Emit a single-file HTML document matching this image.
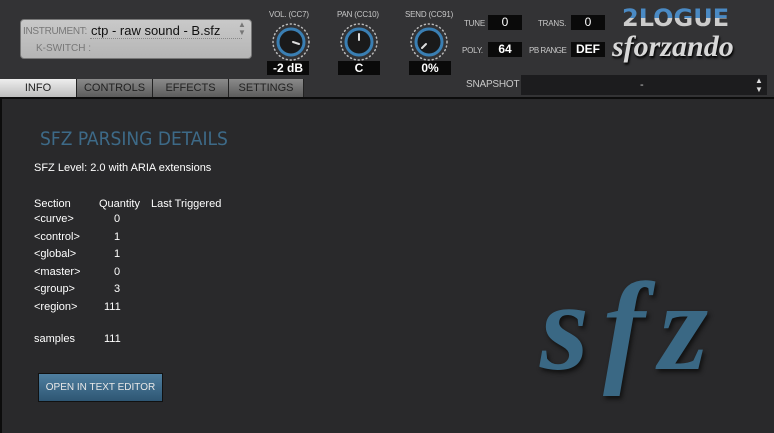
<!DOCTYPE html>
<html><head><style>
body{margin:0;width:774px;height:433px;background:#333335;font-family:"Liberation Sans",sans-serif;position:relative;overflow:hidden}
.a{position:absolute}
.lbl{color:#c8c8c8;font-size:8px;position:absolute;letter-spacing:-0.2px}
.box{position:absolute;background:#0a0a0a;color:#fff;font-size:12px;font-weight:bold;text-align:center}
.tab{position:absolute;top:79px;height:18px;background:linear-gradient(#8a8a8a,#5c5c5c);color:#222;font-size:11px;text-align:center;line-height:19px;border-right:1px solid #222}
.t{position:absolute;color:#fff;font-size:11px}
</style></head><body>
<div class="a" style="left:20px;top:19px;width:230px;height:38px;border-radius:4px;background:linear-gradient(#c9c9c9,#b5b5b5);border:1px solid #777"></div>
<div class="a" style="left:23px;top:26px;font-size:10px;color:#777;letter-spacing:-0.3px">INSTRUMENT:</div>
<div class="a" style="left:91px;top:23px;font-size:13px;color:#111">ctp - raw sound - B.sfz</div>
<div class="a" style="left:90px;top:38px;width:152px;border-top:1px dotted #888"></div>
<div class="a" style="left:36px;top:43px;font-size:10px;color:#777">K-SWITCH :</div>
<div class="a" style="left:238px;top:21px;font-size:8px;color:#777;line-height:8px">▲<br>▼</div>

<div class="lbl" style="left:269px;top:10px">VOL. (CC7)</div>
<div class="lbl" style="left:337px;top:10px">PAN (CC10)</div>
<div class="lbl" style="left:405px;top:10px">SEND (CC91)</div>
<svg class="a" style="left:268px;top:20px" width="190" height="44">
<g fill="none" stroke-linecap="round">
<circle cx="23" cy="22" r="18" stroke="#bbb" stroke-width="1.5" stroke-dasharray="1 3"/>
<circle cx="23" cy="22" r="13" fill="#1a1a1a" stroke="#3a7fb3" stroke-width="3"/>
<line x1="25" y1="22" x2="31" y2="24" stroke="#ddd" stroke-width="2"/>
<circle cx="91" cy="22" r="18" stroke="#bbb" stroke-width="1.5" stroke-dasharray="1 3"/>
<circle cx="91" cy="22" r="13" fill="#1a1a1a" stroke="#3a7fb3" stroke-width="3"/>
<line x1="91" y1="14" x2="91" y2="20" stroke="#ddd" stroke-width="2"/>
<circle cx="161" cy="22" r="18" stroke="#bbb" stroke-width="1.5" stroke-dasharray="1 3"/>
<circle cx="161" cy="22" r="13" fill="#1a1a1a" stroke="#3a7fb3" stroke-width="3"/>
<line x1="154" y1="28" x2="158" y2="24" stroke="#ddd" stroke-width="2"/>
</g></svg>
<div class="box" style="left:267px;top:61px;width:42px;height:14px;line-height:14px">-2 dB</div>
<div class="box" style="left:338px;top:61px;width:42px;height:14px;line-height:14px">C</div>
<div class="box" style="left:409px;top:61px;width:42px;height:14px;line-height:14px">0%</div>

<div class="lbl" style="left:464px;top:19px">TUNE</div>
<div class="box" style="left:488px;top:15px;width:34px;height:15px;line-height:15px;font-weight:normal">0</div>
<div class="lbl" style="left:538px;top:19px">TRANS.</div>
<div class="box" style="left:571px;top:15px;width:34px;height:15px;line-height:15px;font-weight:normal">0</div>
<div class="lbl" style="left:462px;top:46px">POLY.</div>
<div class="box" style="left:488px;top:42px;width:34px;height:15px;line-height:15px">64</div>
<div class="lbl" style="left:529px;top:46px;letter-spacing:-0.5px">PB RANGE</div>
<div class="box" style="left:571px;top:42px;width:34px;height:15px;line-height:15px">DEF</div>
<div class="a" style="left:622px;top:4px;font-size:24px;font-weight:bold;font-family:'DejaVu Sans',sans-serif;background:linear-gradient(#4a8ac4 50%,#ccc 50%);-webkit-background-clip:text;color:transparent">2LOGUE</div>
<div class="a" style="left:612px;top:30px;font-size:30px;font-weight:bold;font-style:italic;color:#d8d8d8;font-family:'Liberation Serif',serif;text-shadow:1px 2px 2px #000">sforzando</div>
<div class="lbl" style="left:466px;top:79px;font-size:10px">SNAPSHOT</div>
<div class="a" style="left:521px;top:75px;width:246px;height:20px;background:#1c1c1e"></div>
<div class="a" style="left:640px;top:79px;color:#ccc;font-size:11px">-</div>
<div class="a" style="left:755px;top:76px;color:#ddd;font-size:8px;line-height:9px">▲<br>▼</div>

<div class="tab" style="left:0;width:76px;background:linear-gradient(#eee,#bdbdbd)">INFO</div>
<div class="tab" style="left:77px;width:75px">CONTROLS</div>
<div class="tab" style="left:153px;width:75px">EFFECTS</div>
<div class="tab" style="left:229px;width:74px">SETTINGS</div>

<div class="a" style="left:0;top:97px;width:774px;height:336px;background:#29292b;border-top:2px solid #0c0c0c;border-left:2px solid #0c0c0c;box-sizing:border-box"></div>
<div class="a" style="left:40px;top:128px;font-size:19px;color:#3d6a88;font-family:'DejaVu Sans Condensed','DejaVu Sans',sans-serif">SFZ PARSING DETAILS</div>
<div class="t" style="left:34px;top:162px">SFZ Level: 2.0 with ARIA extensions</div>
<div class="t" style="left:34px;top:198px">Section</div><div class="t" style="left:99px;top:198px">Quantity</div><div class="t" style="left:151px;top:198px">Last Triggered</div>
<div class="t" style="left:34px;top:213px">&lt;curve&gt;</div><div class="t" style="left:114px;top:213px">0</div>
<div class="t" style="left:34px;top:231px">&lt;control&gt;</div><div class="t" style="left:114px;top:231px">1</div>
<div class="t" style="left:34px;top:248px">&lt;global&gt;</div><div class="t" style="left:114px;top:248px">1</div>
<div class="t" style="left:34px;top:266px">&lt;master&gt;</div><div class="t" style="left:114px;top:266px">0</div>
<div class="t" style="left:34px;top:283px">&lt;group&gt;</div><div class="t" style="left:114px;top:283px">3</div>
<div class="t" style="left:34px;top:301px">&lt;region&gt;</div><div class="t" style="left:104px;top:301px">111</div>
<div class="t" style="left:34px;top:333px">samples</div><div class="t" style="left:104px;top:333px">111</div>
<div class="a" style="left:38px;top:373px;width:123px;height:27px;background:linear-gradient(#4f7fa0,#2e5673);border:1px solid #111;color:#e8e8e8;font-size:10px;line-height:27px;text-align:center">OPEN IN TEXT EDITOR</div>
<div class="a" style="left:540px;top:258px;font-size:126px;line-height:140px;font-weight:bold;font-style:italic;font-family:'Liberation Serif',serif;color:#3a6884;text-shadow:2px 3px 4px #111;letter-spacing:14px">sfz</div>
</body></html>
